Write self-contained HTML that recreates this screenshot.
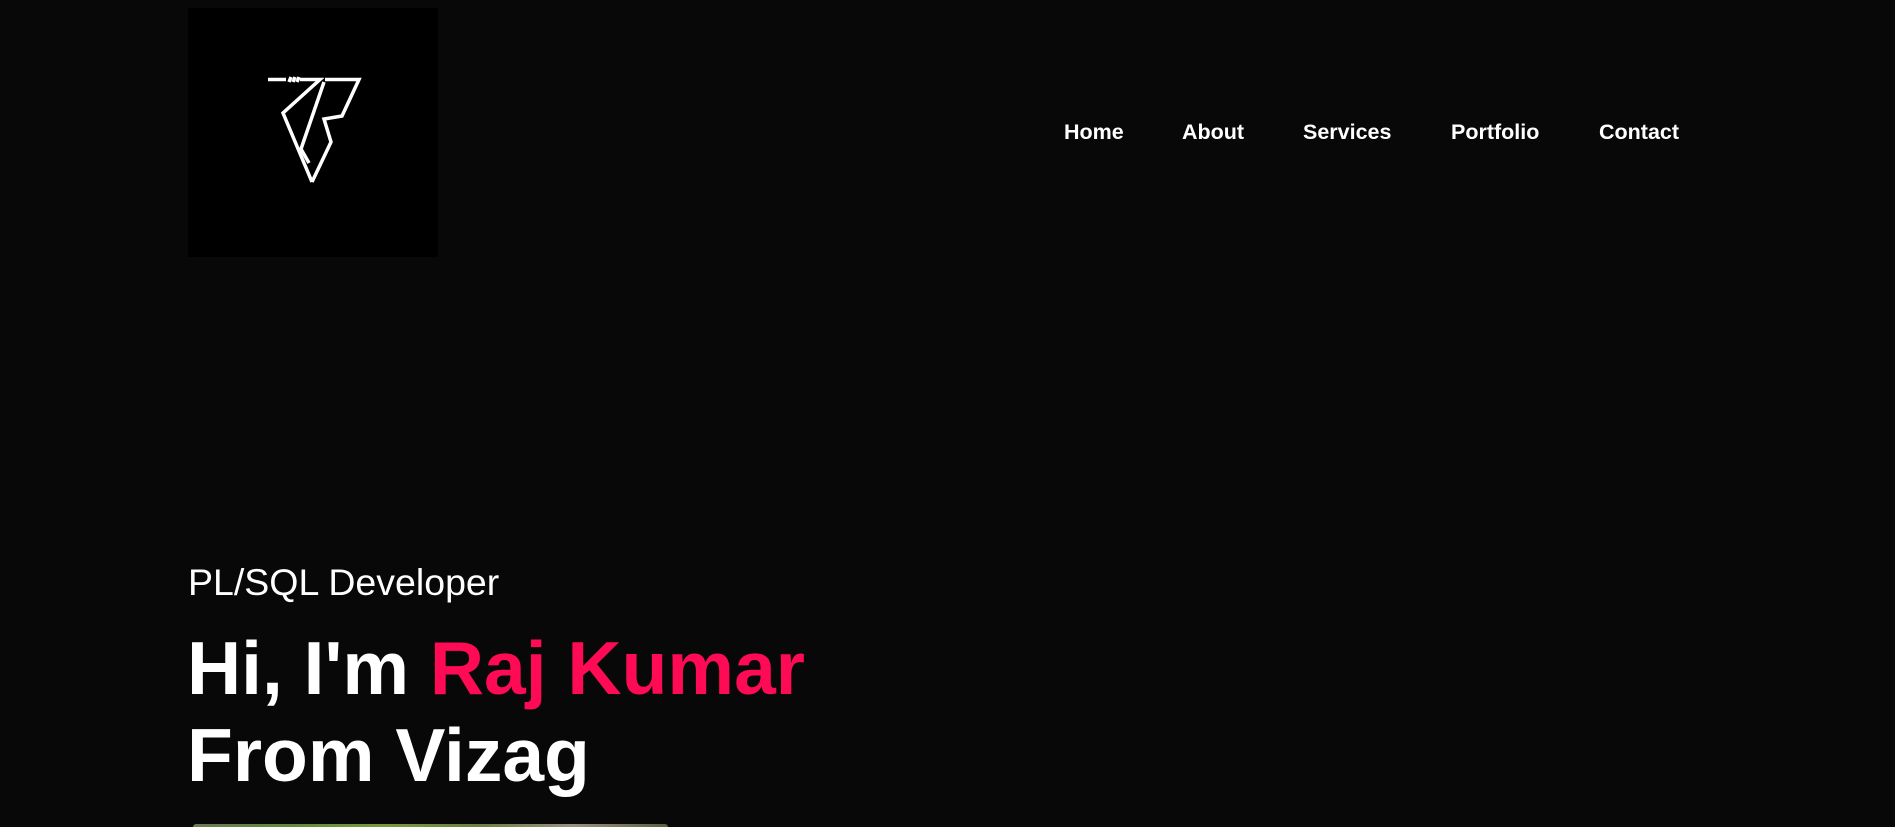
<!DOCTYPE html>
<html><head><meta charset="utf-8"><style>
html,body{margin:0;padding:0;background:#080808;width:1895px;height:827px;overflow:hidden;font-family:"Liberation Sans",Arial,sans-serif;color:#fff;position:relative}
.logo{position:absolute;left:188px;top:8px;width:250px;height:249px;background:#000}
nav a{position:absolute;top:119px;font-weight:bold;font-size:21.5px;color:#fff;text-decoration:none;line-height:26px}
.sub{position:absolute;left:188px;top:560px;font-size:37.5px;line-height:44px}
h1{position:absolute;left:187px;top:625px;margin:0;font-size:75px;line-height:87px;font-weight:bold}
h1 span{color:#ff0a54}
.img{position:absolute;left:193px;top:824px;width:475px;height:3px;border-radius:18px 18px 0 0;background:linear-gradient(90deg,#6b7a55,#5f8a3a,#7a9a3a,#6a8040,#9a9080,#5a6040)}
</style></head><body>
<div class="logo"><svg width="250" height="249" viewBox="188 8 250 249">
<g fill="none" stroke="#fff" stroke-width="3.5" stroke-linejoin="miter">
<path d="M268 79.5 H286"/>
<path d="M289 82 l2 -5 M293 82 l2 -5 M297 82 l2 -5"/>
<path d="M300 79.5 H320 L283 113 L312 182"/>
<path d="M325 79.5 H359 L342 116 L324 119 L331 142 L312 182"/>
<path d="M324 82 L301 149 L309 163"/>
</g></svg></div>
<nav><a style="left:1064px">Home</a><a style="left:1182px">About</a><a style="left:1303px">Services</a><a style="left:1451px">Portfolio</a><a style="left:1599px">Contact</a></nav>
<div class="sub">PL/SQL Developer</div>
<h1>Hi, I'm <span>Raj Kumar</span><br>From Vizag</h1>
<div class="img"></div>
</body></html>
